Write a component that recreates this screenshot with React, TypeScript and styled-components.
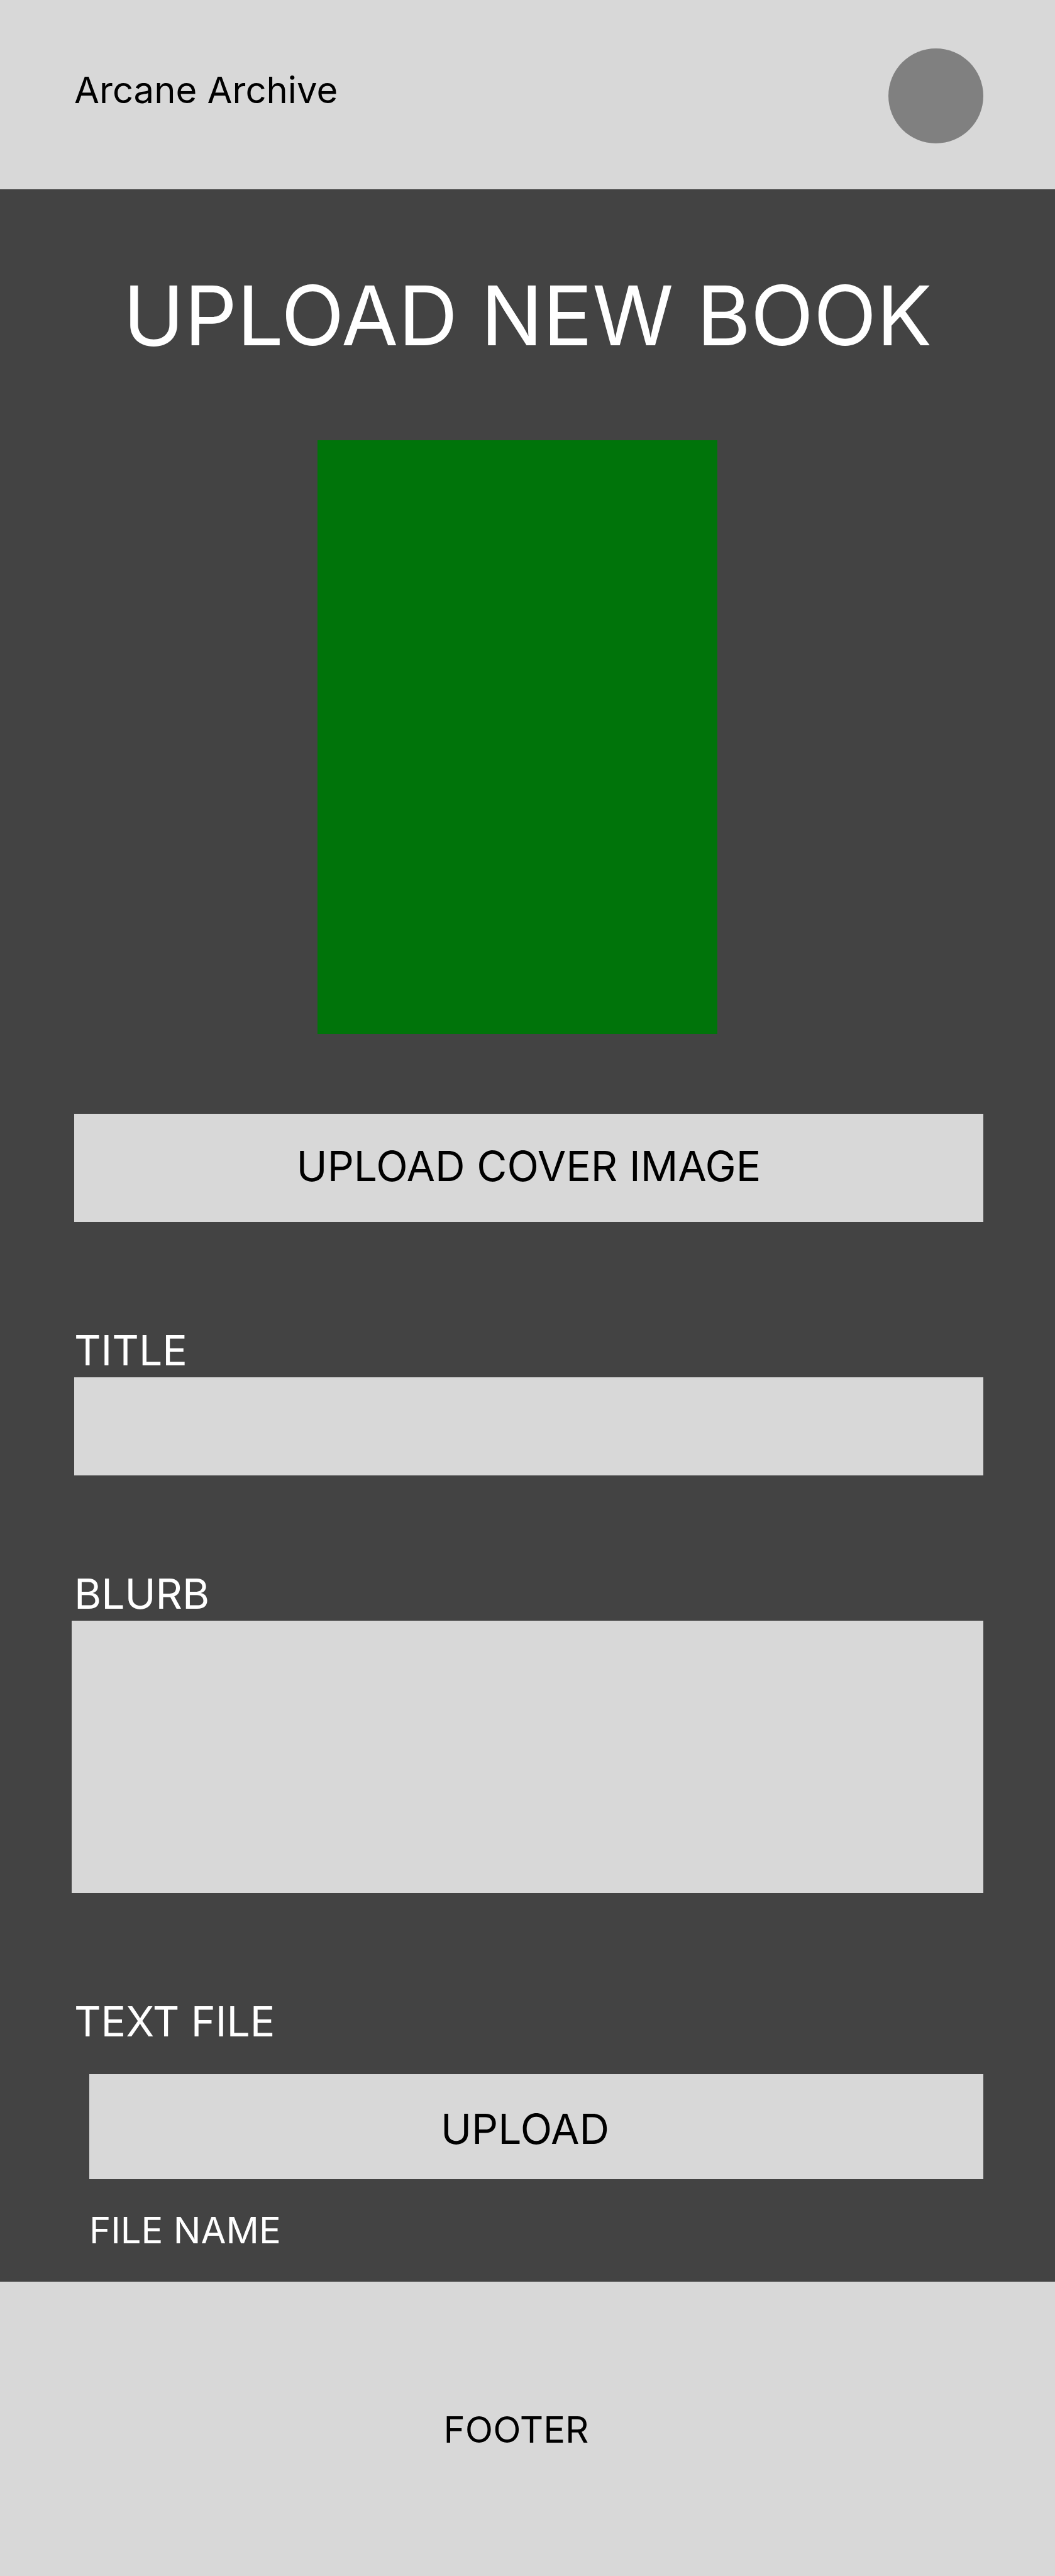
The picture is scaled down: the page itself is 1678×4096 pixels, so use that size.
import React from "react";
import styled, { createGlobalStyle } from "styled-components";

const color = {
  panel: "#d8d8d8",
  page: "#434343",
  avatar: "#808080",
  cover: "#00740a",
  ink: "#000000",
  light: "#ffffff",
};

const GlobalStyle = createGlobalStyle`
  *, *::before, *::after {
    box-sizing: border-box;
  }
  body {
    margin: 0;
    background: ${color.page};
    font-family: Inter, "Liberation Sans", sans-serif;
    font-weight: 400;
  }
`;

const Header = styled.header`
  display: flex;
  justify-content: space-between;
  align-items: flex-start;
  padding: 77px 114px 73px 118px;
  background: ${color.panel};
`;

const Brand = styled.a`
  padding-top: 32px;
  color: ${color.ink};
  font-size: 58px;
  line-height: 68px;
  text-decoration: none;
`;

const Avatar = styled.button`
  width: 151px;
  height: 151px;
  padding: 0;
  border: 0;
  border-radius: 50%;
  background: ${color.avatar};
  cursor: pointer;
`;

const Main = styled.main`
  padding: 121px 0 48px;
  color: ${color.light};
`;

const Heading = styled.h1`
  margin: 0 0 118px;
  font-size: 131px;
  font-weight: 400;
  line-height: 160px;
  text-align: center;
`;

const Form = styled.form`
  display: flex;
  flex-direction: column;
  padding: 0 114px 0 118px;
`;

const CoverRow = styled.div`
  display: flex;
  justify-content: center;
  padding-right: 36px;
  margin-bottom: 127px;
`;

const Cover = styled.div`
  width: 636px;
  height: 944px;
  background: ${color.cover};
`;

const UploadButton = styled.button<{ $padding: string }>`
  width: 100%;
  padding: ${(p) => p.$padding};
  border: 0;
  border-radius: 0;
  background: ${color.panel};
  color: ${color.ink};
  font: inherit;
  font-size: 66px;
  line-height: 78px;
  text-align: center;
  cursor: pointer;
`;

const Field = styled.div<{ $gap: number }>`
  display: flex;
  flex-direction: column;
  margin-top: ${(p) => p.$gap}px;
`;

const Label = styled.label`
  margin-bottom: 4px;
  font-size: 66px;
  line-height: 78px;
`;

const TextInput = styled.input`
  width: 100%;
  height: 156px;
  padding: 0 24px;
  border: 0;
  border-radius: 0;
  background: ${color.panel};
  color: ${color.ink};
  font: inherit;
  font-size: 66px;
`;

const TextArea = styled.textarea`
  height: 433px;
  margin-left: -4px;
  padding: 24px;
  border: 0;
  border-radius: 0;
  background: ${color.panel};
  color: ${color.ink};
  font: inherit;
  font-size: 66px;
  resize: none;
`;

const FileGroup = styled.div`
  display: flex;
  flex-direction: column;
  gap: 47px;
  padding: 41px 0 0 24px;
`;

const FileName = styled.output`
  font-size: 58px;
  line-height: 68px;
`;

const Footer = styled.footer`
  padding: 201px 36px 199px 0;
  background: ${color.panel};
  color: ${color.ink};
  font-size: 58px;
  line-height: 68px;
  text-align: center;
`;

export default function App() {
  return (
    <>
      <GlobalStyle />
      <Header>
        <Brand href="#">Arcane Archive</Brand>
        <Avatar type="button" aria-label="Account" />
      </Header>
      <Main>
        <Heading>UPLOAD NEW BOOK</Heading>
        <Form onSubmit={(e) => e.preventDefault()}>
          <CoverRow>
            <Cover role="img" aria-label="Book cover" />
          </CoverRow>
          <UploadButton type="button" $padding="44px 0 50px">
            UPLOAD COVER IMAGE
          </UploadButton>
          <Field $gap={165}>
            <Label htmlFor="title">TITLE</Label>
            <TextInput id="title" type="text" />
          </Field>
          <Field $gap={149}>
            <Label htmlFor="blurb">BLURB</Label>
            <TextArea id="blurb" />
          </Field>
          <Field $gap={165}>
            <Label htmlFor="text-file">TEXT FILE</Label>
            <FileGroup>
              <UploadButton id="text-file" type="button" $padding="48px 36px 41px 0">
                UPLOAD
              </UploadButton>
              <FileName htmlFor="text-file">FILE NAME</FileName>
            </FileGroup>
          </Field>
        </Form>
      </Main>
      <Footer>FOOTER</Footer>
    </>
  );
}
